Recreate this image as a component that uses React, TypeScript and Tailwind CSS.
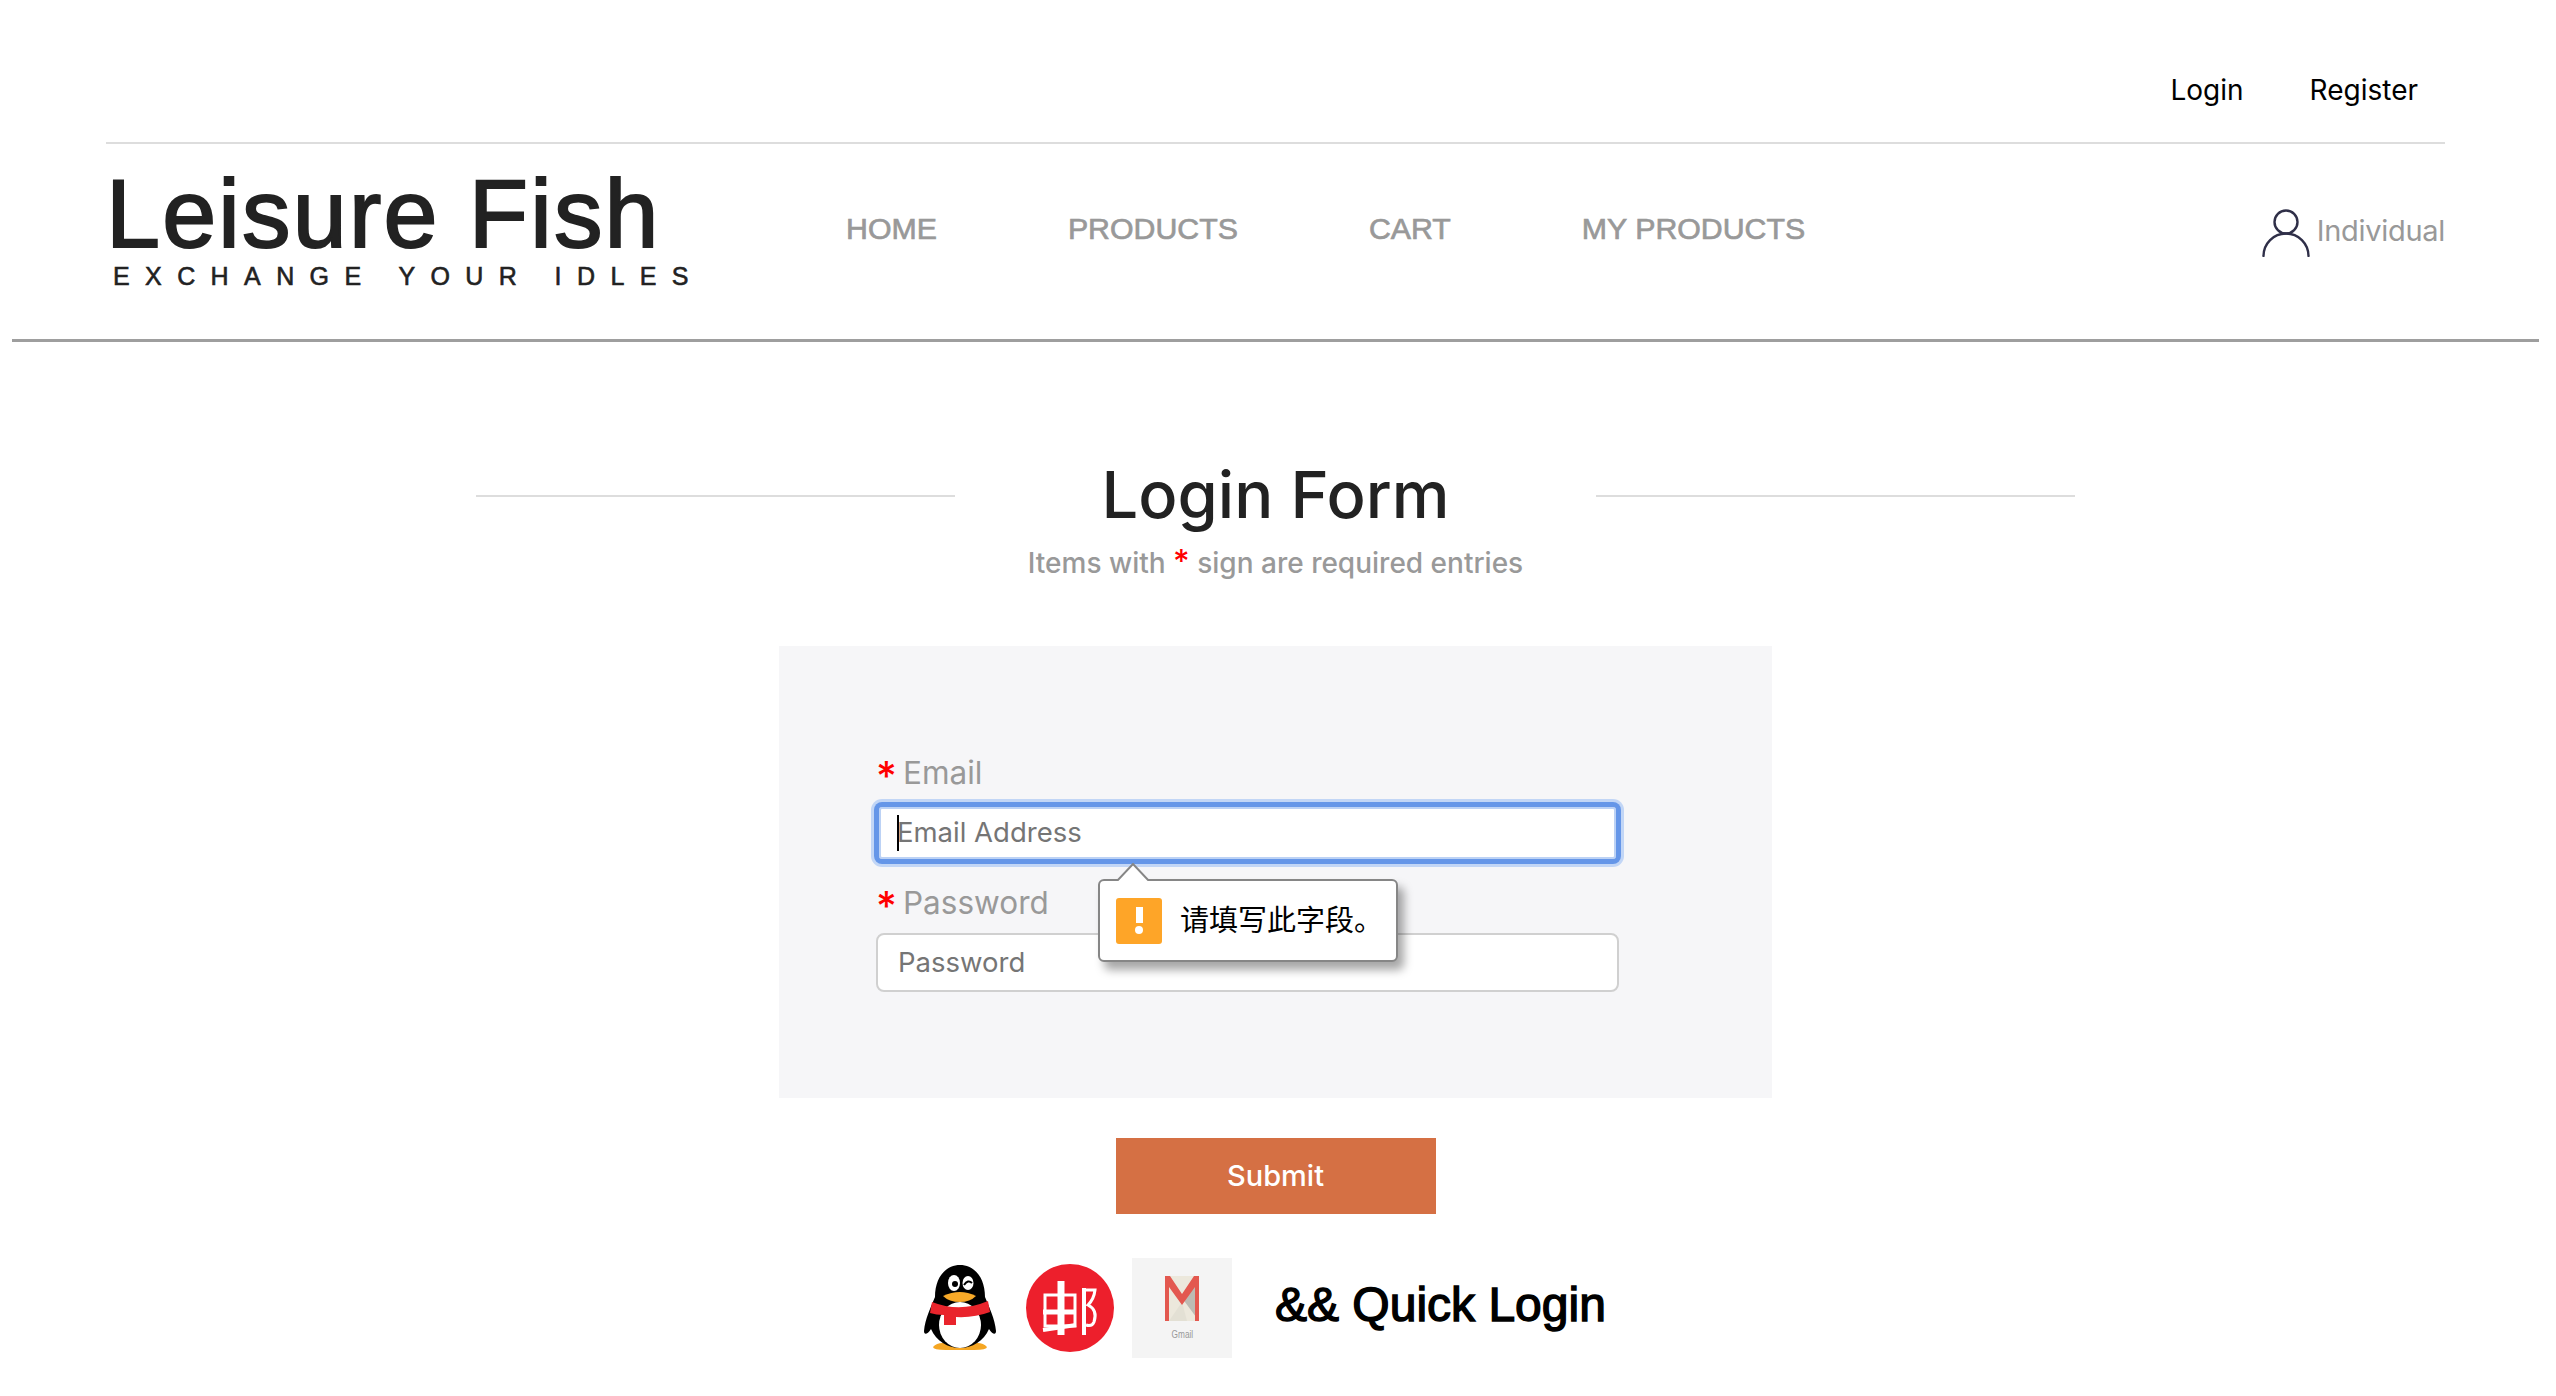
const sans = "font-['Liberation_Sans',Arial,sans-serif]";
const ui = "font-[Inter,'Noto_Sans_CJK_SC',sans-serif]";

function PersonIcon() {
  return (
    <svg width="48" height="48" viewBox="0 0 48 48" fill="none" stroke="#2f2f48" strokeWidth="2.4" strokeLinecap="round">
      <circle cx="24" cy="13" r="11.5" />
      <path d="M1.5 47A22.5 22.5 0 0 1 46.5 47" />
    </svg>
  );
}

function Penguin() {
  return (
    <svg width="72" height="86" viewBox="0 0 72 86">
      <path d="M9 82Q14 76 26 79H46Q58 76 63 82Q63 85 50 85H22Q9 85 9 82Z" fill="#f5a623" />
      <path d="M36 0C22 0 11 12 11 32C7 42 1 54 0 66C0 70 3 70 7 64C12 76 24 83 36 83C48 83 60 76 65 64C69 70 72 70 72 66C71 54 65 42 61 32C61 12 50 0 36 0Z" fill="#000" />
      <ellipse cx="36" cy="60" rx="21" ry="23" fill="#fff" />
      <ellipse cx="30" cy="18" rx="6" ry="8" fill="#fff" />
      <ellipse cx="44" cy="18" rx="5.5" ry="7" fill="#fff" />
      <circle cx="31" cy="19" r="3" fill="#000" />
      <path d="M40 20Q44 14 48 18" stroke="#000" strokeWidth="2" fill="none" />
      <path d="M19 31Q36 23 52 31Q46 37 36 37Q25 37 19 31Z" fill="#f7a928" />
      <path d="M8 37Q36 48 64 36L66 47Q50 53 32 52V60H20V50Q12 50 6 48Z" fill="#e9242c" />
    </svg>
  );
}

function PostLogo() {
  return (
    <svg width="88" height="88" viewBox="0 0 88 88">
      <circle cx="44" cy="44" r="44" fill="#ed1f2c" />
      <g fill="none" stroke="#fff">
        <path d="M19 31H49V62H19Z" strokeWidth="3" />
        <path d="M35 17V71" strokeWidth="7" />
        <path d="M17 48H50" strokeWidth="5" />
        <path d="M17 66L50 61" strokeWidth="4" />
        <path d="M56 26H69Q68 35 62 41Q72 46 68 58Q66 63 60 61" strokeWidth="3" />
        <path d="M58 24V71" strokeWidth="4" />
      </g>
    </svg>
  );
}

function GmailTile() {
  return (
    <div className="flex h-[100px] w-[100px] flex-col items-center bg-[#f4f4f4] pt-[18px]">
      <svg width="34" height="45" viewBox="0 0 34 45">
        <path d="M0 0H34V45H0Z" fill="#ece8dc" />
        <path d="M17 22L34 0V45Z" fill="#bcbbb3" />
        <path d="M4 45L17 26L22 45Z" fill="#e3e0d4" />
        <path d="M0 0H5L17 18L29 0H34V45H30V11L17 29L4 11V45H0Z" fill="#e3584f" />
      </svg>
      <span className={`${sans} mt-[8px] scale-x-75 text-[11px] leading-none text-[#999]`}>Gmail</span>
    </div>
  );
}

function Field({ label, placeholder, focused }: { label: string; placeholder: string; focused?: boolean }) {
  return (
    <div>
      <div className={`${ui} flex h-[36px] items-center text-[31.5px] leading-none text-[#999]`}>
        <span className="mr-[10px] mt-[6px] w-[17px] text-[40px] font-medium text-[#f00]">*</span>
        {label}
      </div>
      <div
        className={
          focused
            ? "mt-[13px] flex h-[58px] items-center rounded-[6px] border-[3px] border-[#6596e8] bg-white pl-[18px] shadow-[inset_0_0_0_2px_#bcd2f5,0_0_0_2px_#6596e8,0_0_0_5px_#c2d6f6]"
            : "mt-[12px] flex h-[59px] items-center rounded-[8px] border-2 border-[#d0d0d0] bg-white pl-[20px]"
        }
      >
        {focused && <span className="mr-[-2px] h-[36px] w-[2px] bg-black" />}
        <span className={`${ui} text-[27.5px] text-[#757575]`}>{placeholder}</span>
      </div>
    </div>
  );
}

export default function App() {
  return (
    <div className="min-h-[1396px] w-[2551px] overflow-hidden bg-white">
      <div className="mx-[106px] flex h-[144px] items-center justify-end gap-[66px] border-b-2 border-[#ddd] pr-[27px] pt-[38px]">
        <a className={`${ui} text-[28px] text-black`}>Login</a>
        <a className={`${ui} text-[28px] text-black`}>Register</a>
      </div>

      <div className="mx-[12px] h-[198px] border-b-[3px] border-[#9e9e9e] px-[94px]">
        <div className="flex h-full items-start">
          <div className={`${sans} w-[740px] pt-[21px] text-[#222]`}>
            <div className="text-[97px] leading-[98px] tracking-[2.2px] [-webkit-text-stroke:2px_#222]">Leisure Fish</div>
            <div className="pl-[7px] text-[25px] leading-[26px] tracking-[15.4px] [-webkit-text-stroke:0.6px_#222]">EXCHANGE YOUR IDLES</div>
          </div>
          <nav className={`${sans} flex gap-[131px] pt-[62px] text-[30.3px] text-[#999] [-webkit-text-stroke:0.7px_#999]`}>
            <a>HOME</a>
            <a>PRODUCTS</a>
            <a>CART</a>
            <a>MY PRODUCTS</a>
          </nav>
          <div className="ml-auto flex items-center pt-[65px]">
            <PersonIcon />
            <span className={`${ui} mb-[4px] ml-[7px] text-[29px] tracking-[-0.3px] text-[#999]`}>Individual</span>
          </div>
        </div>
      </div>

      <div className="mx-auto w-[1600px] pt-[117px]">
        <div className="flex items-center justify-center">
          <div className="mt-[1px] h-[2px] w-[479px] bg-[#ddd]" />
          <h1 className={`${ui} w-[641px] text-center text-[65px] font-medium leading-[72px] text-[#222]`}>Login Form</h1>
          <div className="mt-[1px] h-[2px] w-[479px] bg-[#ddd]" />
        </div>
        <p className={`${ui} mt-[12px] text-center text-[28px] font-medium leading-[40px] text-[#999]`}>
          Items with <span className="text-[32px] leading-none text-[#f00]">*</span> sign are required entries
        </p>
      </div>

      <div className="relative mx-auto mt-[63px] h-[452px] w-[993px] bg-[#f6f6f8] px-[97px] pt-[109px]">
        <div className="w-[743px]">
          <Field label="Email" placeholder="Email Address" focused />
          <div className="mt-[23px]">
            <Field label="Password" placeholder="Password" />
          </div>
        </div>

        <div className="absolute left-[319px] top-[233px] flex h-[83px] w-[300px] items-center rounded-[6px] border-2 border-[#868686] bg-white pl-[16px] shadow-[6px_8px_10px_rgba(0,0,0,0.35)]">
          <svg className="absolute left-[16px] top-[-18px]" width="34" height="18" viewBox="0 0 34 18">
            <path d="M1 18L17 1L33 18" fill="#fff" stroke="#868686" strokeWidth="2" />
          </svg>
          <div className="flex h-[46px] w-[46px] flex-col items-center justify-center gap-[3px] rounded-[3px] bg-[#fea528]">
            <div className="h-[16px] w-[7px] bg-white" />
            <div className="h-[8px] w-[8px] rounded-full bg-white" />
          </div>
          <span className={`${ui} ml-[18px] text-[29px] text-black`}>请填写此字段。</span>
        </div>
      </div>

      <button className={`${ui} mx-auto mt-[40px] block h-[76px] w-[320px] bg-[#d57044] text-[29px] font-medium text-white`}>Submit</button>

      <div className="mt-[44px] flex items-center pl-[924px]">
        <Penguin />
        <div className="ml-[30px]"><PostLogo /></div>
        <div className="ml-[18px]"><GmailTile /></div>
        <span className={`${sans} mb-[6px] ml-[43px] text-[48px] text-black [-webkit-text-stroke:1.4px_#000]`}>&amp;&amp; Quick Login</span>
      </div>
    </div>
  );
}
